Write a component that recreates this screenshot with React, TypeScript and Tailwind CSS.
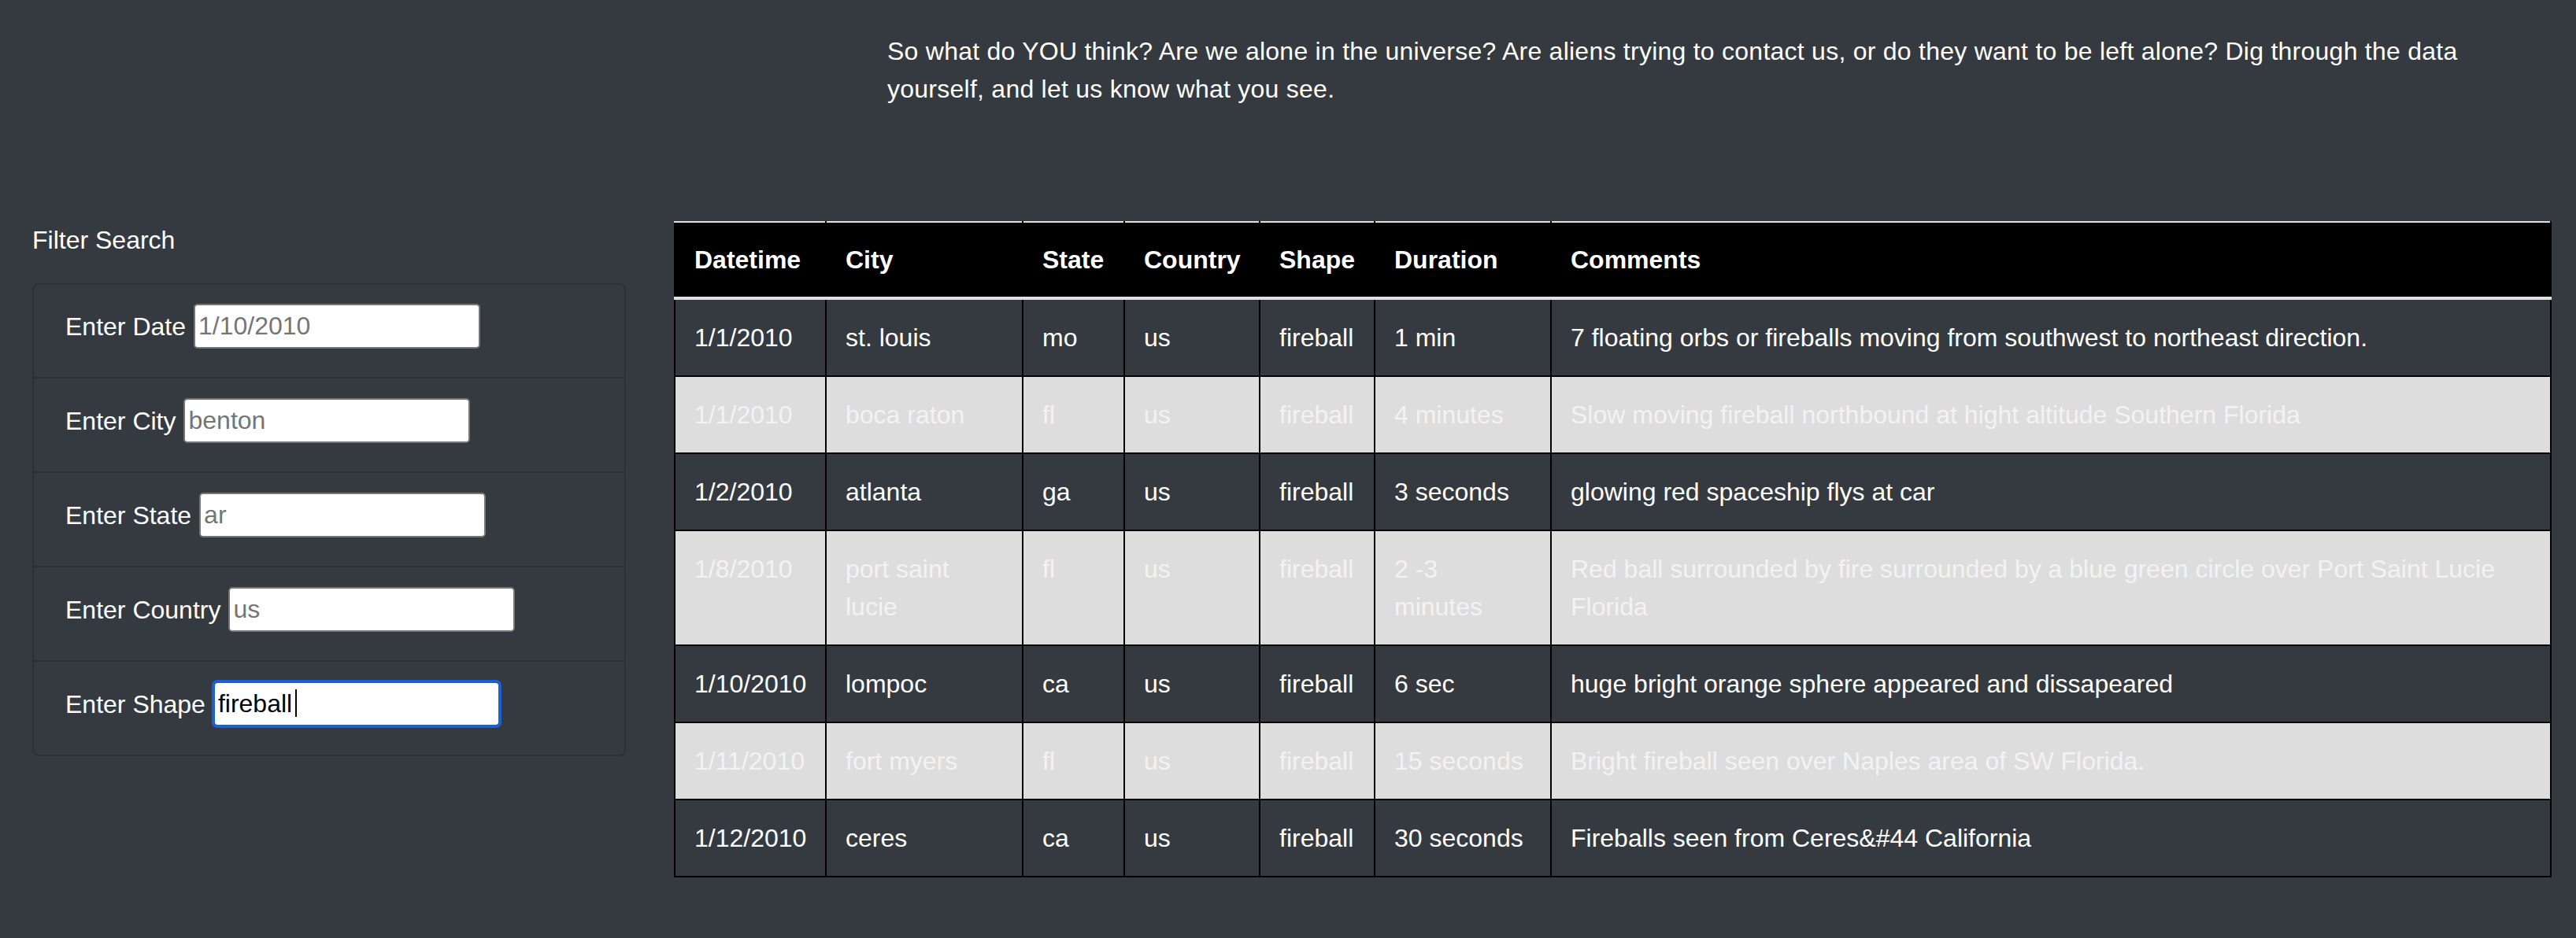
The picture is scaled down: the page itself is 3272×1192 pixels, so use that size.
const sightings = [
  { datetime: "1/1/2010", city: "st. louis", state: "mo", country: "us", shape: "fireball", duration: "1 min", comments: "7 floating orbs or fireballs moving from southwest to northeast direction." },
  { datetime: "1/1/2010", city: "boca raton", state: "fl", country: "us", shape: "fireball", duration: "4 minutes", comments: "Slow moving fireball northbound at hight altitude Southern Florida" },
  { datetime: "1/2/2010", city: "atlanta", state: "ga", country: "us", shape: "fireball", duration: "3 seconds", comments: "glowing red spaceship flys at car" },
  { datetime: "1/8/2010", city: "port saint lucie", state: "fl", country: "us", shape: "fireball", duration: "2 -3 minutes", comments: "Red ball surrounded by fire surrounded by a blue green circle over Port Saint Lucie Florida" },
  { datetime: "1/10/2010", city: "lompoc", state: "ca", country: "us", shape: "fireball", duration: "6 sec", comments: "huge bright orange sphere appeared and dissapeared" },
  { datetime: "1/11/2010", city: "fort myers", state: "fl", country: "us", shape: "fireball", duration: "15 seconds", comments: "Bright fireball seen over Naples area of SW Florida." },
  { datetime: "1/12/2010", city: "ceres", state: "ca", country: "us", shape: "fireball", duration: "30 seconds", comments: "Fireballs seen from Ceres&#44 California" },
];

const filters = [
  { id: "datetime", label: "Enter Date", placeholder: "1/10/2010" },
  { id: "city", label: "Enter City", placeholder: "benton" },
  { id: "state", label: "Enter State", placeholder: "ar" },
  { id: "country", label: "Enter Country", placeholder: "us" },
  { id: "shape", label: "Enter Shape", placeholder: "", value: "fireball" },
];

const columns = [
  { key: "datetime", title: "Datetime", width: "w-[192px]" },
  { key: "city", title: "City", width: "w-[250px]" },
  { key: "state", title: "State", width: "w-[129px]" },
  { key: "country", title: "Country", width: "w-[172px]" },
  { key: "shape", title: "Shape", width: "w-[146px]" },
  { key: "duration", title: "Duration", width: "w-[224px]" },
  { key: "comments", title: "Comments", width: "w-[1270px]" },
] as const;

export default function App() {
  return (
    <div className="w-[3272px] h-[1192px] overflow-hidden bg-[#343a40] text-white font-['Liberation_Sans',Arial,sans-serif] text-[32px] leading-[48px]">
      {/* intro */}
      <div className="pt-[41px] pl-[1127px]">
        <p className="w-[2060px] tracking-[0.25px]">
          So what do YOU think? Are we alone in the universe? Are aliens trying to contact us, or do they
          want to be left alone? Dig through the data yourself, and let us know what you see.
        </p>
      </div>

      <div className="mt-[144px] flex items-start">
        {/* filters */}
        <aside className="ml-[41px] w-[754px]">
          <h5>Filter Search</h5>
          <ul className="mt-[31px] rounded-[8px] border-2 border-[#2c3136]">
            {filters.map((f, i) => (
              <li
                key={f.id}
                className={`px-[40px] ${i > 0 ? "h-[120px] pt-[25px] border-t-2 border-[#2c3136]" : "h-[117px] pt-[24px]"}`}
              >
                <div className="flex h-[57px] items-center gap-[10px]">
                  <label htmlFor={f.id}>{f.label}</label>
                  {f.value ? (
                    <div className="relative">
                      <input
                        id={f.id}
                        type="text"
                        readOnly
                        defaultValue={f.value}
                        className="block h-[57px] w-[364px] rounded-[5px] border-2 border-[#767676] bg-white px-[4px] text-[32px] text-black outline-4 outline-solid outline-[#1b60d4] -outline-offset-2"
                      />
                      <span className="absolute left-[104px] top-[10px] h-[35px] w-[2px] bg-black" />
                    </div>
                  ) : (
                    <input
                      id={f.id}
                      type="text"
                      readOnly
                      placeholder={f.placeholder}
                      className="block h-[57px] w-[364px] rounded-[5px] border-2 border-[#767676] bg-white px-[4px] text-[32px] text-black placeholder:text-[#757575] outline-none"
                    />
                  )}
                </div>
              </li>
            ))}
          </ul>
        </aside>

        {/* results table */}
        <table className="ml-[61px] w-[2383px] table-fixed border-collapse border-2 border-black">
          <colgroup>
            {columns.map((c) => (
              <col key={c.key} className={c.width} />
            ))}
          </colgroup>
          <thead>
            <tr className="bg-black">
              {columns.map((c) => (
                <th
                  key={c.key}
                  className="border-t-2 border-b-4 border-l-2 border-r-2 border-t-[#dee2e6] border-b-[#dee2e6] border-l-black border-r-black px-[24px] py-[23px] text-left align-top font-bold"
                >
                  {c.title}
                </th>
              ))}
            </tr>
          </thead>
          <tbody>
            {sightings.map((row, i) => (
              <tr
                key={row.datetime + row.city}
                className={i % 2 === 1 ? "bg-[#dddddd] text-[#f3f3f3]" : "bg-[#343a40] text-white"}
              >
                {columns.map((c) => (
                  <td key={c.key} className="border-2 border-black px-[24px] py-[24px] align-top">
                    {row[c.key]}
                  </td>
                ))}
              </tr>
            ))}
          </tbody>
        </table>
      </div>
    </div>
  );
}
